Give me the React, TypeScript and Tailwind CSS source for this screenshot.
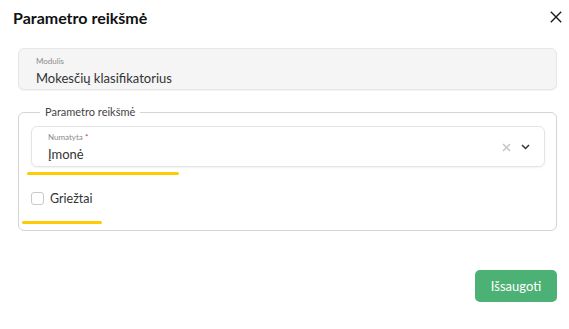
const font = { fontFamily: "Lato, 'Noto Sans', sans-serif" };

export default function App() {
  return (
    <div className="w-[569px] h-[329px] bg-white flex flex-col text-[#222]" style={font}>
      {/* Header */}
      <div className="flex items-center justify-between pt-[8px] pl-[13px] pr-[7px] h-[28px]">
        <h1 className="text-[16px] leading-[18px] font-bold text-[#111]">Parametro reikšmė</h1>
        <svg width="12" height="12" viewBox="0 0 12 12" className="text-[#1a1a1a] -mt-[3px]">
          <path d="M0.8 0.8 L11.2 11.2 M11.2 0.8 L0.8 11.2" stroke="currentColor" strokeWidth="1.4" />
        </svg>
      </div>

      {/* Modulis (readonly) */}
      <div className="ml-[18px] mr-[12px] mt-[20px] h-[42px] rounded-[6px] border border-[#e6e6e6] bg-[#f5f5f5] pl-[17px] pt-[7px] shadow-[0_1px_1px_rgba(0,0,0,0.05)]">
        <div className="text-[8px] leading-[10px] text-[#8a8a8a]">Modulis</div>
        <div className="text-[13px] leading-[18px] text-[#333] mt-[3px]">Mokesčių klasifikatorius</div>
      </div>

      {/* Fieldset */}
      <fieldset className="ml-[18px] mr-[12px] mt-[15px] rounded-[6px] border border-[#d4d4d4] pl-[12px] pr-[11px] pb-[6px]">
        <legend className="ml-[9px] px-[5px] text-[11px] leading-[14px] text-[#444]">Parametro reikšmė</legend>

        <div className="mt-[7px] h-[41px] rounded-[6px] border border-[#e4e4e4] shadow-[0_1px_2px_rgba(0,0,0,0.06)] flex items-center pl-[16px] pr-[14px]">
          <div className="flex-1 pt-[1px]">
            <div className="text-[8px] leading-[10px] text-[#8a8a8a]">
              Numatyta <span className="text-[#e0245e]">*</span>
            </div>
            <div className="text-[13px] leading-[18px] text-[#333] mt-[3px]">Įmonė</div>
          </div>
          <div className="flex items-center gap-[10px] mt-[1px]">
            <svg width="9" height="9" viewBox="0 0 9 9" className="text-[#c4c8cc]">
              <path d="M1 1 L8 8 M8 1 L1 8" stroke="currentColor" strokeWidth="1.6" />
            </svg>
            <svg width="9" height="6" viewBox="0 0 9 6" className="text-[#333]">
              <path d="M1 1 L4.5 4.5 L8 1" stroke="currentColor" strokeWidth="1.5" fill="none" />
            </svg>
          </div>
        </div>

        <div className="mt-[5px] ml-[-4px] h-[3px] w-[152px] rounded-full bg-[#ffcb05]" />

        <label className="mt-[17px] flex items-center gap-[6px] h-[13px]">
          <span className="w-[13px] h-[13px] rounded-[3px] border border-[#c9c9c9] bg-white" />
          <span className="text-[12.5px] leading-[14px] text-[#333]">Griežtai</span>
        </label>

        <div className="mt-[16px] ml-[-9px] h-[3px] w-[80px] rounded-full bg-[#ffcb05]" />
      </fieldset>

      {/* Footer */}
      <div className="flex justify-end mr-[12px] mt-[39px]">
        <button className="w-[82px] h-[32px] rounded-[5px] bg-[#4cb174] text-white text-[13px] leading-[16px]">
          Išsaugoti
        </button>
      </div>
    </div>
  );
}
